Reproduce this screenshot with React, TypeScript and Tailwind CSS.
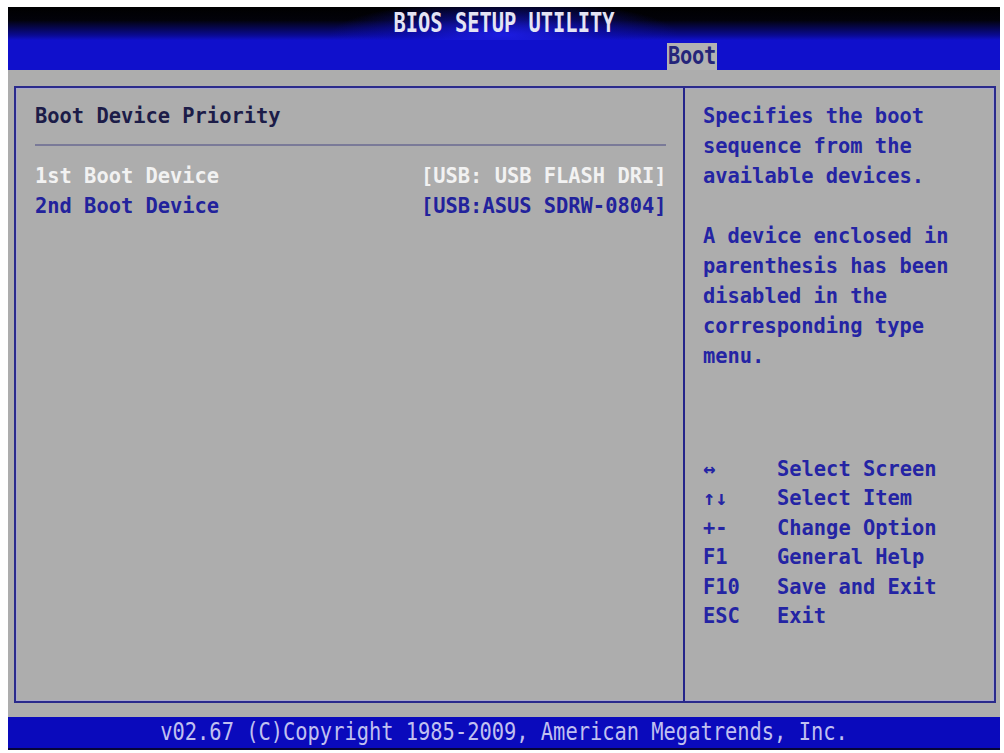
import React from "react";

const helpKeys: [string, string][] = [
  ["↔", "Select Screen"],
  ["↑↓", "Select Item"],
  ["+-", "Change Option"],
  ["F1", "General Help"],
  ["F10", "Save and Exit"],
  ["ESC", "Exit"],
];

const description = [
  "Specifies the boot",
  "sequence from the",
  "available devices.",
  "",
  "A device enclosed in",
  "parenthesis has been",
  "disabled in the",
  "corresponding type",
  "menu.",
];

export default function App() {
  return (
    <div className="min-h-screen w-full bg-white pt-[7px] pl-[8px]">
      <div className="flex h-[743px] w-[992px] flex-col bg-[#adadad] font-['DejaVu_Sans_Mono',monospace] text-[20.4px] font-bold">
        {/* title bar */}
        <div className="flex h-[33px] items-center justify-center bg-[radial-gradient(ellipse_22%_130%_at_50%_85%,#1c1ce0_0%,rgba(16,16,200,0.5)_45%,transparent_80%),linear-gradient(to_bottom,#000000_0%,#02020a_40%,#0a0a90_85%,#1010c8_100%)]">
          <span className="inline-block scale-y-[1.28] leading-none text-[#e4e4f4]">
            BIOS SETUP UTILITY
          </span>
        </div>

        {/* menu tabs */}
        <div className="flex h-[30px] bg-[#1010cc] pl-[659px]">
          <div className="mt-[3px] flex w-[50px] items-center justify-center bg-[#b2b2b2]">
            <span className="inline-block scale-y-[1.22] leading-none tracking-[-0.3px] text-[#25257a]">
              Boot
            </span>
          </div>
        </div>

        {/* body */}
        <div className="flex flex-1 pt-[16px] pr-[4px] pb-[14px] pl-[6px]">
          <div className="flex flex-1 border-2 border-[#2a2a8c] shadow-[inset_0_0_0_1px_#a6a6cc]">
            {/* left: items */}
            <div className="w-[667px] pt-[13px] pl-[19px] pr-[16px] leading-[30px]">
              <div className="text-[#1c1c48]">Boot Device Priority</div>
              <div className="mt-[13px] h-[2px] w-[631px] bg-[#7a7a98]" />
              <div className="mt-[16px] leading-[29.5px]">
                <div className="flex text-[#f2f2f2]">
                  <span className="w-[386px]">1st Boot Device</span>
                  <span className="whitespace-pre">[USB: USB FLASH DRI]</span>
                </div>
                <div className="flex text-[#22229c]">
                  <span className="w-[386px]">2nd Boot Device</span>
                  <span className="whitespace-pre">[USB:ASUS SDRW-0804]</span>
                </div>
              </div>
            </div>

            {/* divider */}
            <div className="w-[2px] bg-[#24248a]" />

            {/* right: help */}
            <div className="flex-1 pt-[13px] pl-[18px] text-[#2424a4]">
              <div className="leading-[30px]">
                {description.map((line, i) => (
                  <div key={i} className="h-[30px] whitespace-pre">
                    {line}
                  </div>
                ))}
              </div>
              <div className="mt-[84px] leading-[29.4px]">
                {helpKeys.map(([k, d]) => (
                  <div key={k} className="flex">
                    <span className="w-[74px]">{k}</span>
                    <span className="whitespace-pre">{d}</span>
                  </div>
                ))}
              </div>
            </div>
          </div>
        </div>

        {/* footer */}
        <div className="flex h-[33px] items-center justify-center border-b-2 border-[#05053a] bg-[#0a0abc]">
          <span className="inline-block scale-y-[1.22] font-normal leading-none text-[#c0c0f0]">
            v02.67 (C)Copyright 1985-2009, American Megatrends, Inc.
          </span>
        </div>
      </div>
    </div>
  );
}
